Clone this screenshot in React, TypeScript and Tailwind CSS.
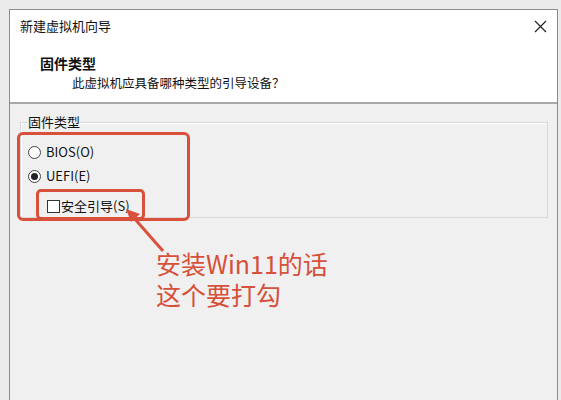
import React from 'react';

const ui = "font-['Noto_Sans_CJK_SC','Microsoft_YaHei',sans-serif]";

const Radio: React.FC<{ checked?: boolean; label: string }> = ({ checked, label }) => (
  <label className="flex items-center shrink-0 h-[24px] gap-[5px]">
    <span className="w-[13px] h-[13px] rounded-full border border-[#444] bg-white flex items-center justify-center">
      {checked && <span className="w-[7px] h-[7px] rounded-full bg-[#222]" />}
    </span>
    <span className="text-[13px] leading-[18px] text-[#111]">{label}</span>
  </label>
);

export default function App() {
  return (
    <div className={`relative w-[561px] h-[400px] overflow-hidden bg-[#ebebeb] pl-[9px] pt-[9px] pr-[3px] flex ${ui}`}>
      <div className="flex-1 flex flex-col border-l border-t border-r border-[#8c8c8c] bg-white">
        {/* title bar */}
        <div className="h-[32px] flex items-center justify-between pl-[10px] pr-[10px]">
          <span className="text-[13px] leading-[18px] text-[#111]">新建虚拟机向导</span>
          <svg width="13" height="13" viewBox="0 0 13 13">
            <path d="M1 1 L12 12 M12 1 L1 12" stroke="#222" strokeWidth="1.2" fill="none" />
          </svg>
        </div>
        {/* header */}
        <div className="h-[62px] flex flex-col pl-[30px] pt-[11px] border-b-2 border-[#a8a8a8]">
          <span className="text-[14px] leading-[20px] font-bold text-[#111]">固件类型</span>
          <span className="text-[12.5px] leading-[18px] text-[#111] pl-[32px] pt-[1px]">此虚拟机应具备哪种类型的引导设备？</span>
        </div>
        {/* body */}
        <div className="flex-1 bg-[#f0f0f0] pl-[10px] pr-[9px] pt-[10px]">
          <fieldset className="h-[104px] border border-[#d9d9d9] shadow-[inset_1px_1px_0_#fff] pl-[7px] pt-[10px] flex flex-col">
            <legend className="text-[13px] leading-[16px] text-[#111]">固件类型</legend>
            <Radio label="BIOS(O)" />
            <Radio checked label="UEFI(E)" />
            <label className="flex items-center shrink-0 gap-[1px] pl-[19px] h-[24px] mt-[6px]">
              <span className="w-[13px] h-[13px] border border-[#333] bg-white" />
              <span className="text-[13px] leading-[18px] text-[#111]">安全引导(S)</span>
            </label>
          </fieldset>
        </div>
      </div>

      {/* annotations */}
      <div className="absolute left-[17px] top-[132px] w-[173px] h-[89px] border-[3px] border-[#d9503b] rounded-[6px]" />
      <div className="absolute left-[36px] top-[189px] w-[109px] h-[31px] border-[3px] border-[#d9503b] rounded-[5px]" />
      <svg className="absolute left-0 top-0" width="561" height="400">
        <line x1="163" y1="251" x2="134" y2="218" stroke="#d9503b" strokeWidth="3" />
        <polygon points="126,209 140,214 131,222" fill="#d9503b" />
      </svg>
      <p className="absolute left-[156px] top-[248px] text-[25px] leading-[31px] text-[#d6503a]">
        安装Win11的话
        <br />
        这个要打勾
      </p>
    </div>
  );
}
